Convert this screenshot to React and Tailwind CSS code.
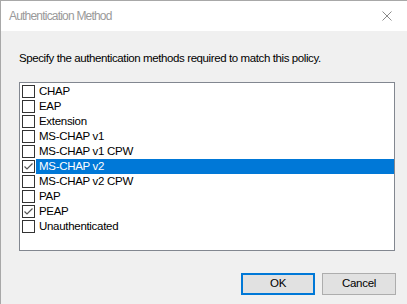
import React from "react";

const items = [
  { label: "CHAP", checked: false },
  { label: "EAP", checked: false },
  { label: "Extension", checked: false },
  { label: "MS-CHAP v1", checked: false },
  { label: "MS-CHAP v1 CPW", checked: false },
  { label: "MS-CHAP v2", checked: true, selected: true },
  { label: "MS-CHAP v2 CPW", checked: false },
  { label: "PAP", checked: false },
  { label: "PEAP", checked: true },
  { label: "Unauthenticated", checked: false },
];

function Box({ checked }) {
  return (
    <div className="w-[13px] h-[13px] border border-[#333333] bg-white shrink-0 flex items-center justify-center">
      {checked && (
        <svg width="11" height="11" viewBox="0 0 11 11">
          <path d="M1.5 5.5 L4 8 L9.5 2.5" fill="none" stroke="#555" strokeWidth="1.2" />
        </svg>
      )}
    </div>
  );
}

export default function App() {
  return (
    <div
      className="w-[407px] h-[304px] flex flex-col border-l border-t border-[#a8a8a8] bg-[#f0f0f0] text-[11.5px] tracking-[-0.3px] text-black"
      style={{ fontFamily: '"Liberation Sans", Arial, sans-serif' }}
    >
      <div className="h-[30px] bg-white flex items-center justify-between pl-[8px] pr-[15px] shrink-0">
        <span className="text-[#9a9a9a] text-[12px] tracking-[-0.8px]">Authentication Method</span>
        <svg width="10" height="10" viewBox="0 0 10 10">
          <path d="M0.5 0.5 L9.5 9.5 M9.5 0.5 L0.5 9.5" stroke="#8a8a8a" strokeWidth="1" />
        </svg>
      </div>
      <div className="pl-[18px] pt-[20px] leading-[15px] tracking-[-0.4px]">
        Specify the authentication methods required to match this policy.
      </div>
      <div className="ml-[18px] mt-[16px] w-[376px] h-[169px] border border-[#828790] bg-white pt-[1px] pr-0 pl-[2px] flex flex-col">
        {items.map((it) => (
          <div key={it.label} className="h-[15px] flex items-center">
            <Box checked={it.checked} />
            <div
              className={
                "ml-[1px] flex-1 h-[15px] pl-[3px] leading-[15px] " +
                (it.selected ? "bg-[#0078d7] text-white" : "")
              }
            >
              {it.label}
            </div>
          </div>
        ))}
      </div>
      <div className="flex justify-end gap-[7px] pr-[11px] mt-[22px]">
        <button className="w-[74px] h-[22px] border-2 border-[#0078d7] bg-[#e1e1e1] leading-none">
          OK
        </button>
        <button className="w-[74px] h-[22px] border border-[#adadad] bg-[#e1e1e1] leading-none">
          Cancel
        </button>
      </div>
    </div>
  );
}
